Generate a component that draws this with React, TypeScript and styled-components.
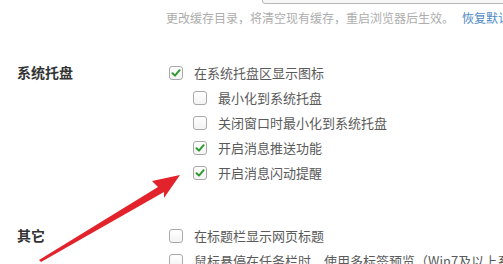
import React from "react";
import styled, { createGlobalStyle } from "styled-components";

const Global = createGlobalStyle`
  html, body { margin: 0; padding: 0; background: #fff; }
  body { font-family: "Noto Sans CJK SC", "Noto Sans", sans-serif; overflow: hidden; }
`;

const Page = styled.div`
  position: relative;
  width: 503px;
  height: 264px;
  overflow: hidden;
`;

const TopRow = styled.div`
  display: flex;
  align-items: flex-end;
  padding-left: 262px;
  height: 4px;
`;

const PathInput = styled.div`
  height: 26px;
  width: 280px;
  flex-shrink: 0;
  border: 1px solid #b8b8b8;
  border-radius: 3px;
  background: #f7f7f7;
  box-sizing: border-box;
`;

const HintRow = styled.div`
  display: flex;
  align-items: center;
  height: 20px;
  margin-top: 3px;
  padding-left: 166px;
  font-size: 12px;
  white-space: nowrap;
`;

const Hint = styled.span`
  color: #adadad;
  width: 296px;
  flex-shrink: 0;
`;

const Link = styled.span`
  color: #4f8ac6;
`;

const Section = styled.div<{ $top: number }>`
  display: flex;
  margin-top: ${(p) => p.$top}px;
`;

const Label = styled.div`
  width: 152px;
  padding-left: 17px;
  height: 25px;
  line-height: 25px;
  font-size: 14px;
  font-weight: bold;
  color: #333;
  flex-shrink: 0;
`;

const Options = styled.div`
  display: flex;
  flex-direction: column;
`;

const Row = styled.div<{ $indent?: boolean }>`
  display: flex;
  align-items: center;
  height: 25px;
  padding-left: ${(p) => (p.$indent ? 24 : 0)}px;
  font-size: 13px;
  color: #5a5a5a;
  white-space: nowrap;
`;

const Box = styled.span`
  width: 14px;
  height: 14px;
  box-sizing: border-box;
  border: 1px solid #a9a9a9;
  border-radius: 3px;
  background: linear-gradient(#fff, #f3f3f3);
  margin-right: 11px;
  display: flex;
  align-items: center;
  justify-content: center;
  flex-shrink: 0;
`;

const ArrowSvg = styled.svg`
  position: absolute;
  left: 0;
  top: 0;
  pointer-events: none;
`;

function Check({ on }: { on?: boolean }) {
  return (
    <Box>
      {on && (
        <svg width="10" height="10" viewBox="0 0 10 10">
          <path d="M1.5 5.2 L4 7.6 L8.6 2.2" fill="none" stroke="#2f9a2f" strokeWidth="2" strokeLinecap="round" strokeLinejoin="round" />
        </svg>
      )}
    </Box>
  );
}

function Option({ on, indent, children }: { on?: boolean; indent?: boolean; children: React.ReactNode }) {
  return (
    <Row $indent={indent}>
      <Check on={on} />
      {children}
    </Row>
  );
}

export default function App() {
  return (
    <Page>
      <Global />
      <TopRow>
        <PathInput />
      </TopRow>
      <HintRow>
        <Hint>更改缓存目录，将清空现有缓存，重启浏览器后生效。</Hint>
        <Link>恢复默认</Link>
      </HintRow>
      <Section $top={33}>
        <Label>系统托盘</Label>
        <Options>
          <Option on>在系统托盘区显示图标</Option>
          <Option indent>最小化到系统托盘</Option>
          <Option indent>关闭窗口时最小化到系统托盘</Option>
          <Option indent on>开启消息推送功能</Option>
          <Option indent on>开启消息闪动提醒</Option>
        </Options>
      </Section>
      <Section $top={38}>
        <Label>其它</Label>
        <Options>
          <Option>在标题栏显示网页标题</Option>
          <Option>鼠标悬停在任务栏时，使用多标签预览（Win7及以上系统）</Option>
        </Options>
      </Section>
      <ArrowSvg width="503" height="264" viewBox="0 0 503 264">
        <polygon
          points="180,175 152,181 158,187 39,260 41,262 164,192 164,198"
          fill="#e3232b"
        />
      </ArrowSvg>
    </Page>
  );
}
